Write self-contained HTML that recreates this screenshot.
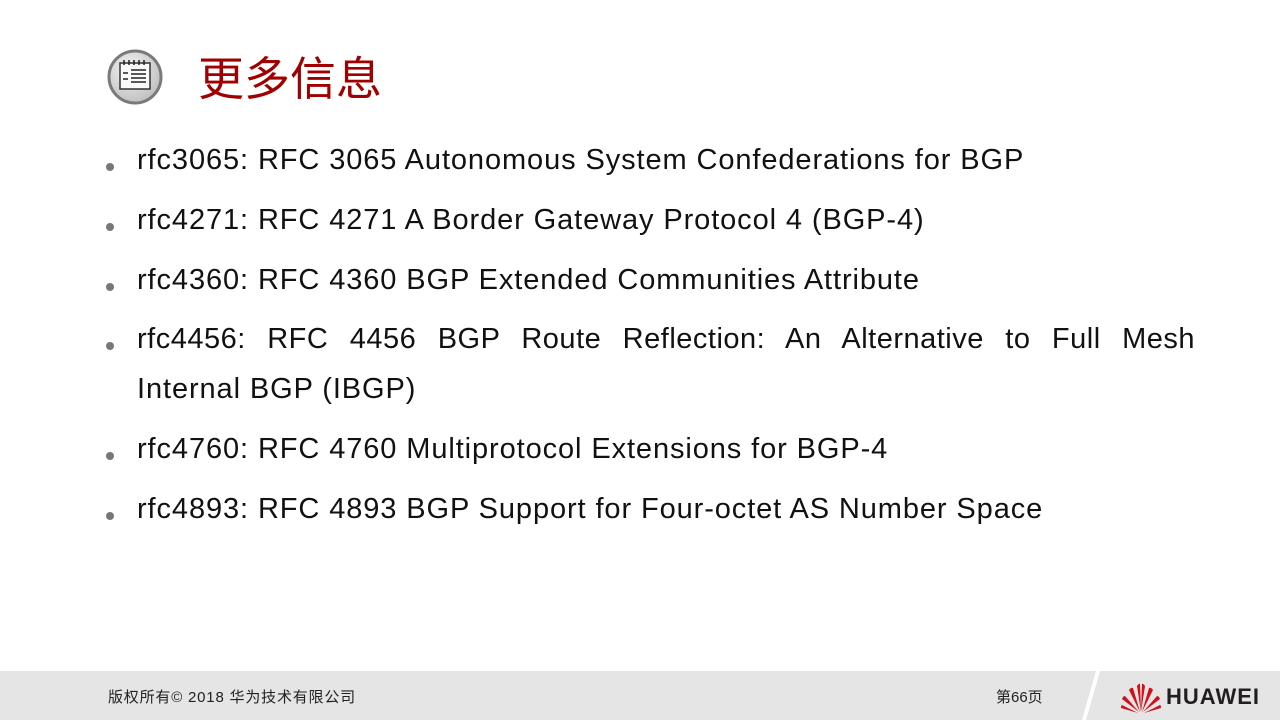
<!DOCTYPE html>
<html><head><meta charset="utf-8"><style>
body{margin:0;width:1280px;height:720px;position:relative;background:#fff;overflow:hidden;font-family:"Liberation Sans","Noto Sans CJK SC",sans-serif;color:#111}
.t{position:absolute;left:198px;top:46px;font-size:46px;color:#a00000;font-family:"Noto Sans CJK SC",sans-serif;line-height:60px}
.l{position:absolute;left:137px;font-size:29px;letter-spacing:0.9px;line-height:34px;white-space:nowrap}
.b{position:absolute;left:106px;width:8px;height:8px;border-radius:50%;background:#777}
.j{text-align:justify;text-align-last:justify;width:1058px;white-space:normal;letter-spacing:0.5px}
.foot{position:absolute;left:0;top:671px;width:1280px;height:49px;background:#e5e5e5}
</style></head><body>
<svg style="position:absolute;left:107px;top:49px" width="56" height="56" viewBox="0 0 56 56">
<defs><radialGradient id="g" cx="40%" cy="35%" r="70%"><stop offset="0" stop-color="#f4f4f4"/><stop offset="1" stop-color="#bdbdbd"/></radialGradient></defs>
<circle cx="28" cy="28" r="26" fill="url(#g)" stroke="#7a7a7a" stroke-width="3"/>
<rect x="13" y="14" width="30" height="26" fill="#fafafa" stroke="#333" stroke-width="1.5"/>
<g stroke="#222" stroke-width="1.5"><line x1="17" y1="11" x2="17" y2="16"/><line x1="22" y1="11" x2="22" y2="16"/><line x1="27" y1="11" x2="27" y2="16"/><line x1="32" y1="11" x2="32" y2="16"/><line x1="37" y1="11" x2="37" y2="16"/>
<line x1="24" y1="21" x2="39" y2="21"/><line x1="24" y1="25" x2="39" y2="25"/><line x1="24" y1="29" x2="39" y2="29"/><line x1="24" y1="33" x2="39" y2="33"/><line x1="16" y1="24" x2="21" y2="24"/><line x1="16" y1="30" x2="21" y2="30"/></g>
</svg>
<div class="t">更多信息</div>

<div class="b" style="top:163px"></div><div class="l" style="top:143px">rfc3065: RFC 3065 Autonomous System Confederations for BGP</div>
<div class="b" style="top:223px"></div><div class="l" style="top:203px">rfc4271: RFC 4271 A Border Gateway Protocol 4 (BGP-4)</div>
<div class="b" style="top:283px"></div><div class="l" style="top:263px">rfc4360: RFC 4360 BGP Extended Communities Attribute</div>
<div class="b" style="top:342px"></div><div class="l j" style="top:322px">rfc4456: RFC 4456 BGP Route Reflection: An Alternative to Full Mesh</div>
<div class="l" style="top:372px">Internal BGP (IBGP)</div>
<div class="b" style="top:452px"></div><div class="l" style="top:432px">rfc4760: RFC 4760 Multiprotocol Extensions for BGP-4</div>
<div class="b" style="top:512px"></div><div class="l" style="top:492px">rfc4893: RFC 4893 BGP Support for Four-octet AS Number Space</div>

<div class="foot"></div>
<svg style="position:absolute;left:1080px;top:671px" width="30" height="49"><polygon points="16,0 20,0 6,49 2,49" fill="#fff"/></svg>
<div style="position:absolute;left:108px;top:686px;font-size:15px;letter-spacing:0.8px;color:#222">版权所有© 2018 华为技术有限公司</div>
<div style="position:absolute;left:996px;top:686px;font-size:15px;color:#222">第66页</div>
<svg style="position:absolute;left:1120px;top:682px" width="42" height="32" viewBox="0 0 42 32">
<g fill="#d0111b">
<path d="M21 30 L17 4 Q19 1 20 2 Z"/><path d="M21 30 L25 4 Q23 1 22 2 Z"/>
<path d="M20 30 L9 8 Q11 5 13 6 Z"/><path d="M22 30 L33 8 Q31 5 29 6 Z"/>
<path d="M19 30 L2 17 Q3 14 5 14 Z"/><path d="M23 30 L40 17 Q39 14 37 14 Z"/>
<path d="M18 31 L1 26 Q1 23 2 23 Z"/><path d="M24 31 L41 26 Q41 23 40 23 Z"/>
</g></svg>
<div style="position:absolute;left:1166px;top:684px;font-size:22px;font-weight:bold;color:#231f20;letter-spacing:1px">HUAWEI</div>
</body></html>
